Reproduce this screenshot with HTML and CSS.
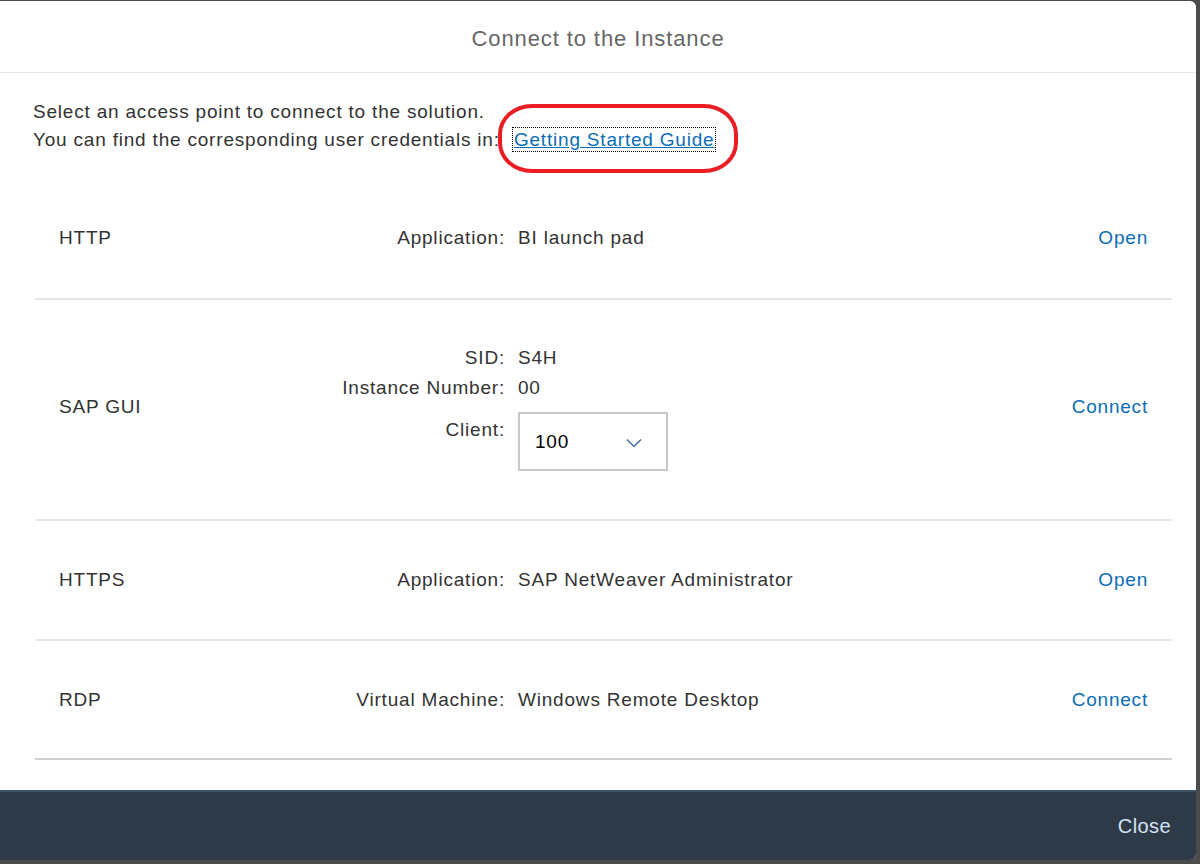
FILE: index.html
```html
<!DOCTYPE html>
<html lang="en">
<head>
<meta charset="utf-8">
<title>Connect to the Instance</title>
<link rel="stylesheet" href="styles.css">
</head>
<body>
<div class="dialog">
  <header class="dlg-header">
    <h1 class="dlg-title">Connect to the Instance</h1>
  </header>
  <main class="dlg-content">
    <div class="intro">
      <p>Select an access point to connect to the solution.</p>
      <p>You can find the corresponding user credentials in: <span class="guide-wrap"><a class="guide" href="#">Getting Started Guide</a><span class="annot"></span></span></p>
    </div>
    <ul class="points">
      <li class="point point-first">
        <div class="pname">HTTP</div>
        <dl class="details">
          <dt>Application:</dt><dd>BI launch pad</dd>
        </dl>
        <a class="action" href="#">Open</a>
      </li>
      <li class="point point-gui">
        <div class="pname">SAP GUI</div>
        <dl class="details">
          <dt>SID:</dt><dd>S4H</dd>
          <dt>Instance Number:</dt><dd>00</dd>
          <dt class="client-label">Client:</dt>
          <dd class="client-dd">
            <div class="select">
              <span class="select-val">100</span>
              <svg class="chev" width="16" height="10" viewBox="0 0 16 10"><path d="M1 1.5 L8 8.5 L15 1.5" fill="none" stroke="#3b6c9a" stroke-width="1.4"/></svg>
            </div>
          </dd>
        </dl>
        <a class="action" href="#">Connect</a>
      </li>
      <li class="point">
        <div class="pname">HTTPS</div>
        <dl class="details">
          <dt>Application:</dt><dd>SAP NetWeaver Administrator</dd>
        </dl>
        <a class="action" href="#">Open</a>
      </li>
      <li class="point point-last">
        <div class="pname">RDP</div>
        <dl class="details">
          <dt>Virtual Machine:</dt><dd>Windows Remote Desktop</dd>
        </dl>
        <a class="action" href="#">Connect</a>
      </li>
    </ul>
  </main>
  <footer class="dlg-footer">
    <button class="close-btn" type="button">Close</button>
  </footer>
</div>
</body>
</html>
```

FILE: styles.css
```css
* { box-sizing: border-box; }
html, body { margin: 0; padding: 0; }
body {
  background: #4b4b4b;
  width: 1200px;
  height: 864px;
  overflow: hidden;
  font-family: "Liberation Sans", Arial, sans-serif;
  color: #333;
}
.dialog {
  margin-top: 1px;
  width: 1196px;
  height: 859px;
  background: #fff;
  border-radius: 0 6px 6px 0;
  overflow: hidden;
  display: flex;
  flex-direction: column;
}
.dlg-header {
  height: 72px;
  border-bottom: 1px solid #e5e5e5;
  display: flex;
  align-items: center;
  justify-content: center;
  flex-shrink: 0;
}
.dlg-title {
  margin: 0;
  font-size: 22px;
  letter-spacing: 0.9px;
  font-weight: normal;
  color: #666;
  padding-top: 4px;
}
.dlg-content {
  flex: 1;
  padding: 25px 24px 0 33px;
}
.intro p {
  margin: 0;
  font-size: 19px;
  letter-spacing: 0.8px;
  line-height: 28px;
  color: #333;
}
.guide-wrap {
  position: relative;
  display: inline-block;
  margin-left: 8px;
}
.guide {
  color: #0a6eb4;
  text-decoration: underline;
  outline: 1px dotted #000;
  outline-offset: 1px;
}
.annot {
  position: absolute;
  left: -16px;
  top: -22px;
  width: 240px;
  height: 69px;
  border: 4px solid #ea1c24;
  border-radius: 34px / 30px;
  pointer-events: none;
}
.points {
  list-style: none;
  margin: 26px 0 0 2px;
  padding: 0;
}
.point {
  display: flex;
  align-items: center;
  padding: 44px 24px 44px 24px;
  border-bottom: 2px solid #e5e5e5;
  font-size: 19px;
  letter-spacing: 0.8px;
  line-height: 30px;
}
.point-first { padding-top: 43px; padding-bottom: 45px; }
.point-gui { padding-top: 43px; padding-bottom: 48px; }
.point-last { border-bottom-color: #cfcfcf; padding-bottom: 43px; }
.pname {
  width: 160px;
  flex-shrink: 0;
  color: #333;
}
.details {
  margin: 0;
  display: grid;
  grid-template-columns: 286px auto;
  column-gap: 13px;
  align-items: start;
}
.details dt {
  text-align: right;
  color: #333;
}
.details dd {
  margin: 0;
  color: #333;
}
.client-label { margin-top: 9px; padding-top: 3px; }
.client-dd { margin-top: 9px !important; }
.select {
  width: 150px;
  height: 59px;
  border: 2px solid #c8c8c8;
  display: flex;
  align-items: center;
  justify-content: space-between;
  padding: 0 24px 0 15px;
}
.select-val {
  color: #000;
  font-size: 19px;
}
.chev { display: block; margin-top: 2px; }
.action {
  margin-left: auto;
  color: #0a6eb4;
  text-decoration: none;
}
.dlg-footer {
  height: 70px;
  flex-shrink: 0;
  background: #2f3a48;
  border-top: 2px solid #3e5062;
  display: flex;
  align-items: center;
  justify-content: flex-end;
  padding-right: 25px;
}
.close-btn {
  background: none;
  border: none;
  padding: 0;
  font-family: "Liberation Sans", Arial, sans-serif;
  font-size: 20px;
  letter-spacing: 0.4px;
  color: #d1e4f6;
  cursor: pointer;
}
```
